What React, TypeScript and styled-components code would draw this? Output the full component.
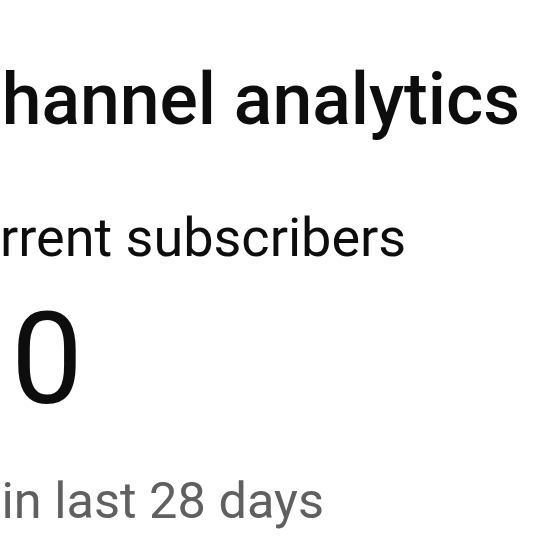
import React from "react";
import styled, { createGlobalStyle } from "styled-components";

const Global = createGlobalStyle`
  html, body {
    margin: 0;
    padding: 0;
    background: #ffffff;
  }
  body {
    font-family: Roboto, "Noto Sans", Arial, sans-serif;
    overflow: hidden;
  }
`;

const Viewport = styled.div`
  width: 560px;
  height: 560px;
  overflow: hidden;
  background: #ffffff;
`;

const Card = styled.div`
  display: flex;
  flex-direction: column;
  align-items: flex-start;
  padding-top: 60px;
`;

const Line = styled.div<{ $shift: number }>`
  margin-left: ${p => p.$shift}px;
  white-space: nowrap;
`;

const Title = styled(Line)`
  font-size: 71.5px;
  font-weight: 500;
  line-height: 80px;
  color: #0d0d0d;
`;

const Label = styled(Line)`
  margin-top: 66px;
  font-size: 54px;
  font-weight: 400;
  line-height: 64px;
  color: #0d0d0d;
`;

const Count = styled(Line)`
  margin-top: 19px;
  font-size: 128px;
  font-weight: 400;
  line-height: 140px;
  color: #0d0d0d;
`;

const Delta = styled(Line)`
  margin-top: 42px;
  font-size: 50.5px;
  font-weight: 400;
  line-height: 60px;
  color: #606060;
`;

export default function App() {
  return (
    <Viewport>
      <Global />
      <Card>
        <Title $shift={-45}>Channel analytics</Title>
        <Label $shift={-65}>Current subscribers</Label>
        <Count $shift={11}>0</Count>
        <Delta $shift={-68}>+0 in last 28 days</Delta>
      </Card>
    </Viewport>
  );
}
